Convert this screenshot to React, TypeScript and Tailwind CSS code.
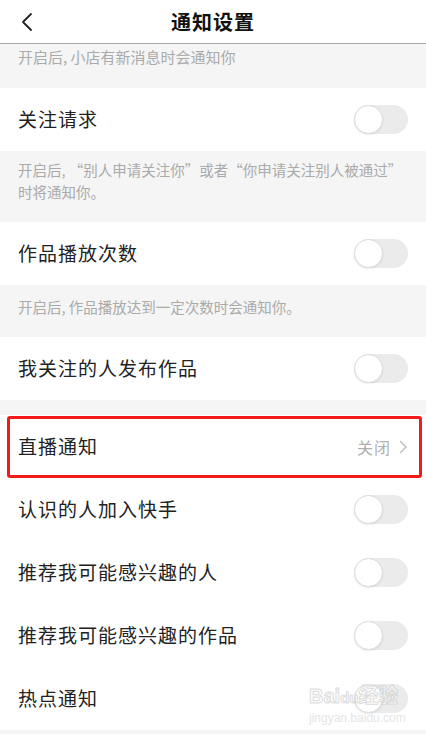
import React from "react";

const font = { fontFamily: '"Noto Sans CJK SC", "Noto Sans", sans-serif' };

function Toggle() {
  return (
    <div className="relative h-[29px] w-[54px] rounded-full bg-[#ebebeb]">
      <div className="absolute left-0 top-0 h-[29px] w-[29px] rounded-full border border-[#dcdcdc] bg-white shadow-[0_1px_2px_rgba(0,0,0,0.08)]" />
    </div>
  );
}

function Row({ title, children }: { title: string; children?: React.ReactNode }) {
  return (
    <div className="flex h-[63px] items-center justify-between bg-white pl-[18px] pr-[18px]">
      <span className="text-[19px] tracking-[1px] text-[#222]">{title}</span>
      {children ?? <Toggle />}
    </div>
  );
}

export default function App() {
  return (
    <div className="relative h-[734px] w-[426px] overflow-hidden bg-[#f5f5f5]" style={font}>
      {/* header */}
      <div className="relative flex h-[44px] items-center justify-center border-b border-[#a8a8a8] bg-white">
        <svg
          className="absolute left-[19px] top-[12px]"
          width="16"
          height="20"
          viewBox="0 0 16 20"
          fill="none"
        >
          <path d="M12 2 L4 10 L12 18" stroke="#222" strokeWidth="1.8" strokeLinecap="round" strokeLinejoin="round" />
        </svg>
        <span className="text-[20px] font-bold tracking-[1px] text-[#111]">通知设置</span>
      </div>

      {/* desc 1 */}
      <div className="h-[44px] px-[18px] pt-[2px] text-[15px] leading-[22px] text-[#aaa]">
        开启后, 小店有新消息时会通知你
      </div>

      <Row title="关注请求" />
      <div className="px-[18px] pb-[19px] pt-[8px] text-[14.5px] leading-[22px] text-[#aaa]">
        开启后, “别人申请关注你”或者“你申请关注别人被通过”
        <br />
        时将通知你。
      </div>

      <Row title="作品播放次数" />
      <div className="px-[18px] pb-[19px] pt-[11px] text-[14.5px] leading-[22px] text-[#aaa]">
        开启后, 作品播放达到一定次数时会通知你。
      </div>

      <Row title="我关注的人发布作品" />
      <div className="h-[15px]" />

      <div className="relative">
        <Row title="直播通知">
          <div className="flex items-center gap-[8px] text-[#b0b0b0]">
            <span className="text-[16px] tracking-[1px]">关闭</span>
            <svg width="9" height="14" viewBox="0 0 9 14" fill="none">
              <path d="M1.5 1.5 L7 7 L1.5 12.5" stroke="#bbb" strokeWidth="1.4" strokeLinecap="round" strokeLinejoin="round" />
            </svg>
          </div>
        </Row>
        <div className="pointer-events-none absolute bottom-0 left-[7px] right-[4px] top-[1px] rounded-[3px] border-[3px] border-[#f51a1a]" />
      </div>

      <Row title="认识的人加入快手" />
      <Row title="推荐我可能感兴趣的人" />
      <Row title="推荐我可能感兴趣的作品" />
      <Row title="热点通知" />

      {/* watermark */}
      <div
        className="pointer-events-none absolute left-[309px] top-[684px] flex flex-col items-start whitespace-nowrap opacity-80"
        style={{ fontFamily: '"Liberation Sans", "Noto Sans CJK SC", sans-serif' }}
      >
        <span className="text-[20px] font-bold leading-[24px] text-white [-webkit-text-stroke:1px_#d4d4d4]">
          Bai<span className="text-[15px]">du</span>经验
        </span>
        <span className="text-[12px] leading-[16px] text-[#e0e0e0]">jingyan.baidu.com</span>
      </div>
    </div>
  );
}
